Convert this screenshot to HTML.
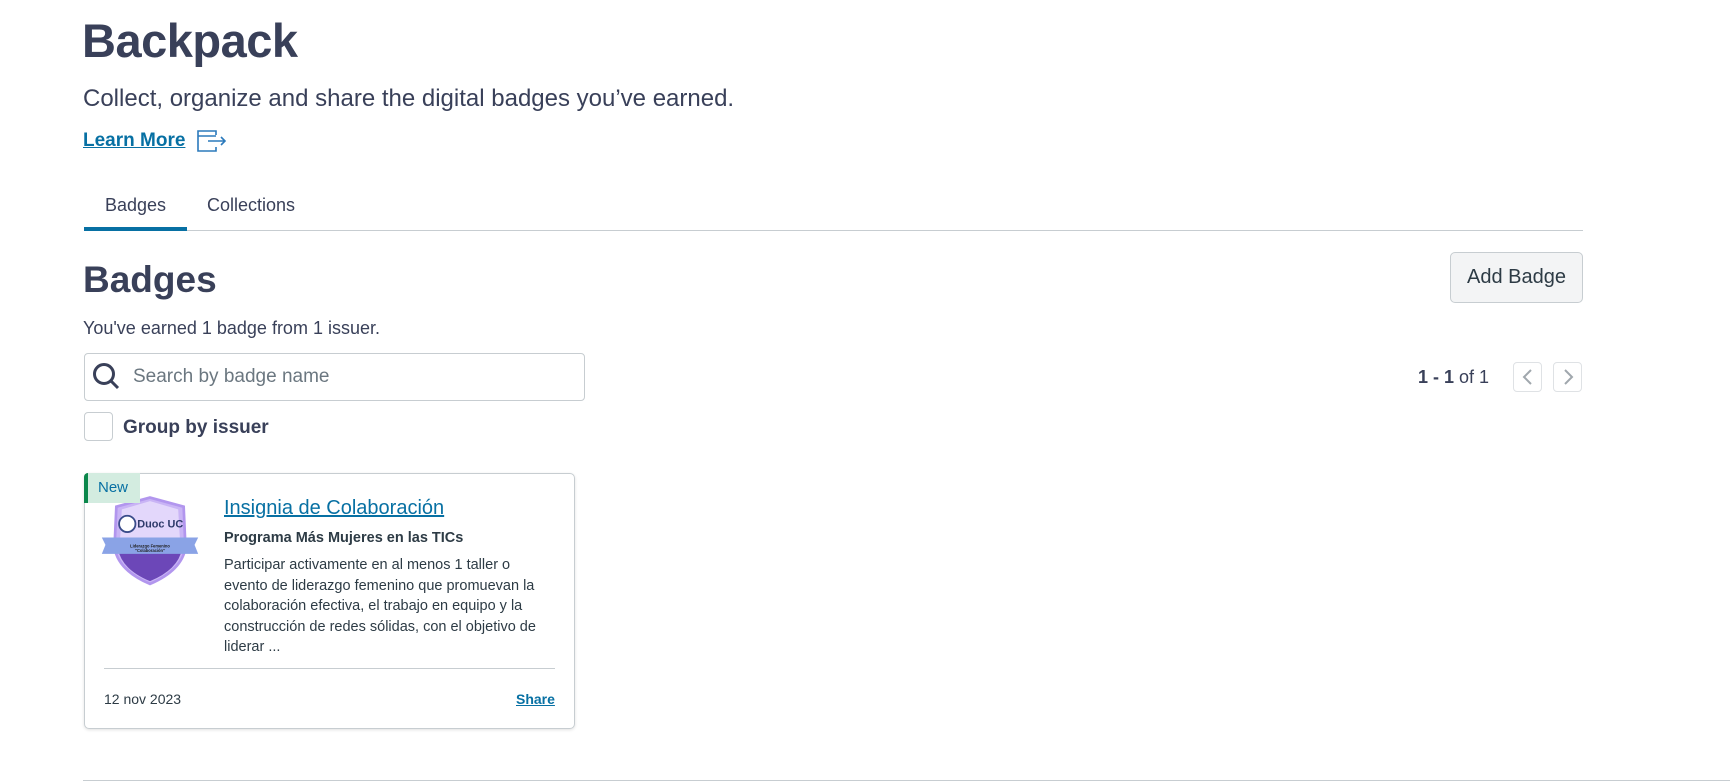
<!DOCTYPE html>
<html><head><meta charset="utf-8"><style>
*{margin:0;padding:0;box-sizing:border-box}
body{width:1730px;height:783px;background:#fff;font-family:"Liberation Sans",sans-serif;color:#394059;position:relative;overflow:hidden}
.a{position:absolute;white-space:nowrap}
a{color:#0770a3}
</style></head><body>
<div class="a" style="left:82px;top:13px;font-size:47px;font-weight:bold;letter-spacing:-0.5px">Backpack</div>
<div class="a" style="left:83px;top:85px;font-size:24px">Collect, organize and share the digital badges you’ve earned.</div>
<div class="a" style="left:83px;top:130px;font-size:19px;font-weight:bold;color:#0770a3;text-decoration:underline">Learn More</div>
<svg class="a" style="left:196px;top:129px" width="32" height="24" viewBox="0 0 32 24" fill="none" stroke="#2b7abc" stroke-width="1.6"><path d="M20 6V2H2v20h18v-4M2 7h18M12 12h17M25 8l4 4-4 4"/></svg>
<div class="a" style="left:105px;top:195px;font-size:18px">Badges</div>
<div class="a" style="left:207px;top:195px;font-size:18px">Collections</div>
<div class="a" style="left:84px;top:230px;width:1499px;height:1px;background:#c7cdd1"></div>
<div class="a" style="left:84px;top:227px;width:103px;height:4px;background:#0770a3"></div>
<div class="a" style="left:83px;top:259px;font-size:37px;font-weight:bold">Badges</div>
<div class="a" style="left:1450px;top:252px;width:133px;height:51px;background:#f3f4f5;border:1px solid #c7cdd1;border-radius:5px;font-size:20px;color:#2d3b45;text-align:center;line-height:49px">Add Badge</div>
<div class="a" style="left:83px;top:318px;font-size:18px">You've earned 1 badge from 1 issuer.</div>
<div class="a" style="left:84px;top:353px;width:501px;height:48px;border:1px solid #c7cdd1;border-radius:4px"></div>
<svg class="a" style="left:92px;top:362px" width="30" height="30" viewBox="0 0 30 30" fill="none" stroke="#394059" stroke-width="3"><circle cx="12" cy="12" r="9.5"/><path d="M19 19l7 7"/></svg>
<div class="a" style="left:133px;top:366px;font-size:19px;color:#6b7780">Search by badge name</div>
<div class="a" style="left:84px;top:412px;width:29px;height:29px;border:1px solid #c7cdd1;border-radius:4px"></div>
<div class="a" style="left:123px;top:417px;font-size:19px;font-weight:bold">Group by issuer</div>
<div class="a" style="left:1418px;top:367px;font-size:18px"><b>1 - 1</b> of 1</div>
<div class="a" style="left:1513px;top:362px;width:29px;height:30px;border:1px solid #dfe2e5;border-radius:4px"></div>
<div class="a" style="left:1553px;top:362px;width:29px;height:30px;border:1px solid #dfe2e5;border-radius:4px"></div>
<svg class="a" style="left:1513px;top:362px" width="70" height="30" fill="none" stroke="#a0a7ad" stroke-width="2"><path d="M18 8l-7 7 7 7M52 8l7 7-7 7"/></svg>
<div class="a" style="left:84px;top:473px;width:491px;height:256px;border:1px solid #c7cdd1;border-radius:5px;box-shadow:0 1px 3px rgba(0,0,0,.12)"></div>
<div class="a" style="left:84px;top:473px;width:56px;height:30px;background:#d3ece0;border-left:4px solid #0b874b;border-top-left-radius:4px;color:#0770a3;font-size:15px;line-height:30px;padding-left:10px;z-index:3">New</div>
<svg class="a" style="left:100px;top:493px;z-index:2" width="100" height="100" viewBox="0 0 110 110">
<path d="M55 5 L92 15 L94 60 Q90 85 55 100 Q20 85 16 60 L18 15 Z" fill="#c9b4f5" stroke="#b296ee" stroke-width="3"/>
<path d="M20 62 L90 62 Q86 84 55 97 Q24 84 20 62Z" fill="#6c47b8"/>
<path d="M24 18 L55 9 L86 18 L88 52 L22 52 Z" fill="#e3d7fb"/>
<circle cx="30" cy="34" r="9" fill="#fff" stroke="#3a4c8a" stroke-width="2"/>
<text x="41" y="38" font-family="Liberation Sans" font-weight="bold" font-size="12" fill="#2e3a6a">Duoc UC</text>
<path d="M2 49 L108 49 L104 57 L108 67 L2 67 L6 57Z" fill="#8aa3e6"/>
<text x="55" y="60" text-anchor="middle" font-family="Liberation Sans" font-weight="bold" font-size="4.5" fill="#222">Liderazgo Femenino</text>
<text x="55" y="65" text-anchor="middle" font-family="Liberation Sans" font-weight="bold" font-size="4.5" fill="#222">"Colaboración"</text>
</svg>
<div class="a" style="left:224px;top:497px;font-size:20px;color:#0770a3;text-decoration:underline">Insignia de Colaboración</div>
<div class="a" style="left:224px;top:530px;font-size:14.5px;font-weight:bold;color:#2d3b45">Programa Más Mujeres en las TICs</div>
<div class="a" style="left:224px;top:555px;font-size:14.5px;line-height:20.6px;color:#2d3b45;white-space:normal;width:325px">Participar activamente en al menos 1 taller o evento de liderazgo femenino que promuevan la colaboración efectiva, el trabajo en equipo y la construcción de redes sólidas, con el objetivo de liderar ...</div>
<div class="a" style="left:104px;top:668px;width:451px;height:1px;background:#c7cdd1"></div>
<div class="a" style="left:104px;top:691px;font-size:14px;color:#2d3b45">12 nov 2023</div>
<div class="a" style="left:516px;top:691px;font-size:14px;font-weight:bold;color:#0770a3;text-decoration:underline">Share</div>
<div class="a" style="left:83px;top:780px;width:1647px;height:1px;background:#c7cdd1"></div>
</body></html>
